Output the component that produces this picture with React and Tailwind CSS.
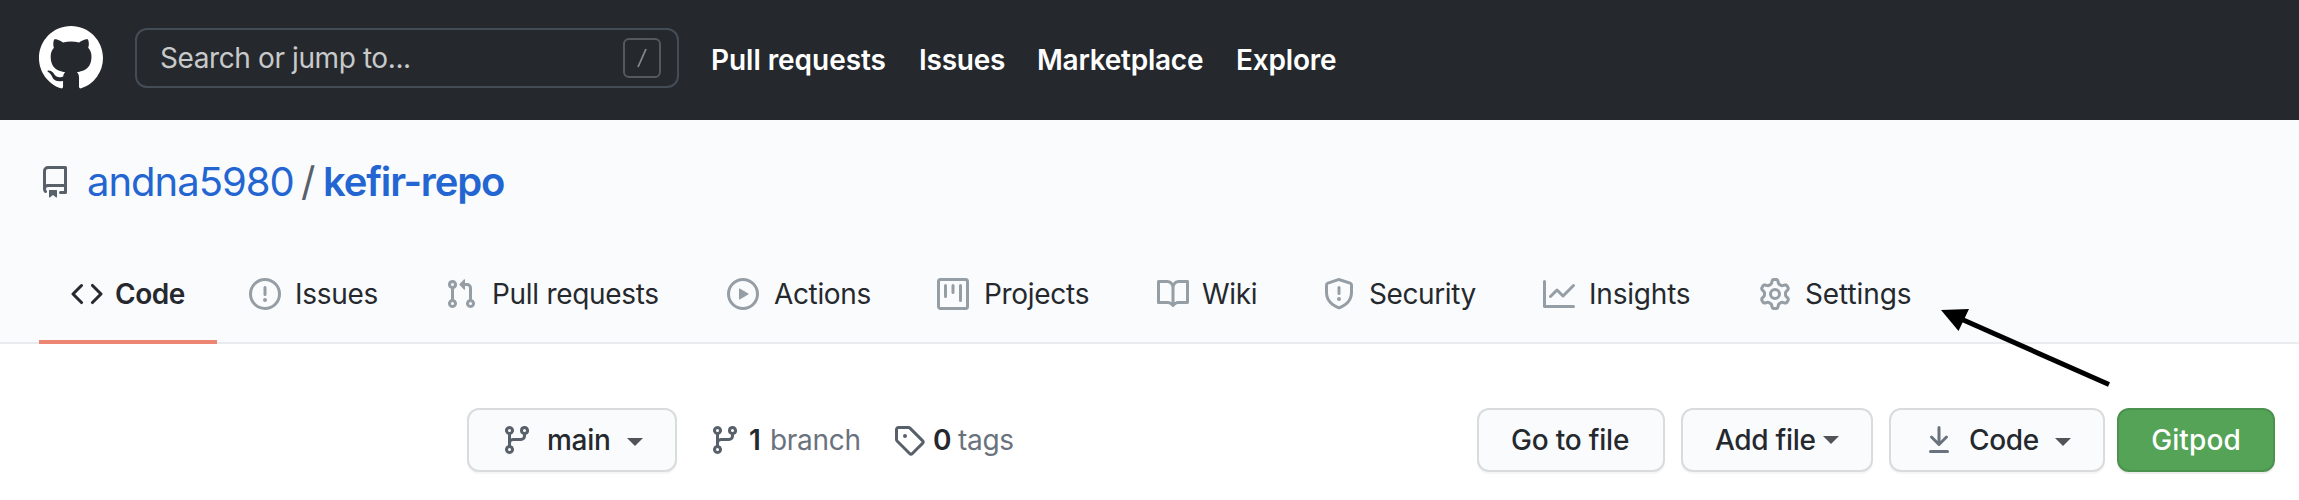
import React from "react";

const paths = {
  github:
    "M8 0C3.58 0 0 3.58 0 8c0 3.54 2.29 6.53 5.47 7.59.4.07.55-.17.55-.38 0-.19-.01-.82-.01-1.49-2.01.37-2.53-.49-2.69-.94-.09-.23-.48-.94-.82-1.13-.28-.15-.68-.52-.01-.53.63-.01 1.08.58 1.23.82.72 1.21 1.87.87 2.33.66.07-.52.28-.87.51-1.07-1.78-.2-3.64-.89-3.64-3.95 0-.87.31-1.59.82-2.15-.08-.2-.36-1.02.08-2.12 0 0 .67-.21 2.2.82.64-.18 1.32-.27 2-.27.68 0 1.36.09 2 .27 1.53-1.04 2.2-.82 2.2-.82.44 1.1.16 1.92.08 2.12.51.56.82 1.27.82 2.15 0 3.07-1.87 3.75-3.65 3.95.29.25.54.73.54 1.48 0 1.07-.01 1.93-.01 2.2 0 .21.15.46.55.38A8.013 8.013 0 0016 8c0-4.42-3.58-8-8-8z",
  repo: "M2 2.5A2.5 2.5 0 014.5 0h8.75a.75.75 0 01.75.75v12.5a.75.75 0 01-.75.75h-2.5a.75.75 0 110-1.5h1.75v-2h-8a1 1 0 00-.714 1.7.75.75 0 01-1.072 1.05A2.495 2.495 0 012 11.5v-9zm10.5-1V9h-8c-.356 0-.694.074-1 .208V2.5a1 1 0 011-1h8zM5 12.25v3.25a.25.25 0 00.4.2l1.45-1.087a.25.25 0 01.3 0L8.6 15.7a.25.25 0 00.4-.2v-3.25a.25.25 0 00-.25-.25h-3.5a.25.25 0 00-.25.25z",
  code: "M4.72 3.22a.75.75 0 011.06 1.06L2.06 8l3.72 3.72a.75.75 0 11-1.06 1.06L.47 8.53a.75.75 0 010-1.06l4.25-4.25zm6.56 0a.75.75 0 10-1.06 1.06L13.94 8l-3.72 3.72a.75.75 0 101.06 1.06l4.25-4.25a.75.75 0 000-1.06l-4.25-4.25z",
  issue:
    "M8 1.5a6.5 6.5 0 100 13 6.5 6.5 0 000-13zM0 8a8 8 0 1116 0A8 8 0 010 8zm9 3a1 1 0 11-2 0 1 1 0 012 0zm-.25-6.25a.75.75 0 00-1.5 0v3.5a.75.75 0 001.5 0v-3.5z",
  pull: "M7.177 3.073L9.573.677A.25.25 0 0110 .854v4.792a.25.25 0 01-.427.177L7.177 3.427a.25.25 0 010-.354zM3.75 2.5a.75.75 0 100 1.5.75.75 0 000-1.5zm-2.25.75a2.25 2.25 0 113 2.122v5.256a2.251 2.251 0 11-1.5 0V5.372A2.25 2.25 0 011.5 3.25zM11 2.5h-1V4h1a1 1 0 011 1v5.628a2.251 2.251 0 101.5 0V5A2.5 2.5 0 0011 2.5zm1 10.25a.75.75 0 111.5 0 .75.75 0 01-1.5 0zM3.75 12a.75.75 0 100 1.5.75.75 0 000-1.5z",
  play: "M1.5 8a6.5 6.5 0 1113 0 6.5 6.5 0 01-13 0zM8 0a8 8 0 100 16A8 8 0 008 0zM6.379 5.227A.25.25 0 006 5.442v5.117a.25.25 0 00.379.214l4.264-2.559a.25.25 0 000-.428L6.379 5.227z",
  project:
    "M1.75 0A1.75 1.75 0 000 1.75v12.5C0 15.216.784 16 1.75 16h12.5A1.75 1.75 0 0016 14.25V1.75A1.75 1.75 0 0014.25 0H1.75zM1.5 1.75a.25.25 0 01.25-.25h12.5a.25.25 0 01.25.25v12.5a.25.25 0 01-.25.25H1.75a.25.25 0 01-.25-.25V1.75zM11.75 3a.75.75 0 00-.75.75v7.5a.75.75 0 001.5 0v-7.5a.75.75 0 00-.75-.75zm-8.25.75a.75.75 0 011.5 0v5.5a.75.75 0 01-1.5 0v-5.5zM8 3a.75.75 0 00-.75.75v3.5a.75.75 0 001.5 0v-3.5A.75.75 0 008 3z",
  book: "M0 1.75A.75.75 0 01.75 1h4.253c1.227 0 2.317.59 3 1.501A3.744 3.744 0 0111.006 1h4.245a.75.75 0 01.75.75v10.5a.75.75 0 01-.75.75h-4.507a2.25 2.25 0 00-1.591.659l-.622.621a.75.75 0 01-1.06 0l-.622-.621A2.25 2.25 0 005.258 13H.75a.75.75 0 01-.75-.75V1.75zm8.755 3a2.25 2.25 0 012.25-2.25H14.5v9h-3.757c-.71 0-1.4.201-1.992.572l.004-7.322zm-1.504 7.324l.004-5.073-.002-2.253A2.25 2.25 0 005.003 2.5H1.5v9h3.757a3.75 3.75 0 011.994.574z",
  shield:
    "M7.467.133a1.75 1.75 0 011.066 0l5.25 1.68A1.75 1.75 0 0115 3.48V7c0 1.566-.32 3.182-1.303 4.682-.983 1.498-2.585 2.813-5.032 3.855a1.7 1.7 0 01-1.33 0c-2.447-1.042-4.049-2.357-5.032-3.855C1.32 10.182 1 8.566 1 7V3.48a1.75 1.75 0 011.217-1.667l5.25-1.68zm.61 1.429a.25.25 0 00-.153 0l-5.25 1.68a.25.25 0 00-.174.238V7c0 1.358.275 2.666 1.057 3.86.784 1.194 2.121 2.34 4.366 3.297a.2.2 0 00.154 0c2.245-.956 3.582-2.104 4.366-3.298C13.225 9.666 13.5 8.36 13.5 7V3.48a.25.25 0 00-.174-.237l-5.25-1.68zM9 10.5a1 1 0 11-2 0 1 1 0 012 0zm-.25-5.75a.75.75 0 10-1.5 0v3a.75.75 0 001.5 0v-3z",
  graph:
    "M1.5 1.75a.75.75 0 00-1.5 0v12.5c0 .414.336.75.75.75h14.5a.75.75 0 000-1.5H1.5V1.75zm14.28 2.53a.75.75 0 00-1.06-1.06L10 7.94 7.53 5.47a.75.75 0 00-1.06 0L3.22 8.72a.75.75 0 001.06 1.06L7 7.06l2.47 2.47a.75.75 0 001.06 0l5.25-5.25z",
  gear: "M7.429 1.525a6.593 6.593 0 011.142 0c.036.003.108.036.137.146l.289 1.105c.147.56.55.967.997 1.189.174.086.341.183.501.29.417.278.97.423 1.53.27l1.102-.303c.11-.03.175.016.195.046.219.31.41.641.573.989.014.031.022.11-.059.19l-.815.806c-.411.406-.562.957-.53 1.456a4.588 4.588 0 010 .582c-.032.499.119 1.05.53 1.456l.815.806c.08.08.073.159.059.19a6.494 6.494 0 01-.573.99c-.02.029-.086.074-.195.045l-1.103-.303c-.559-.153-1.112-.008-1.529.27-.16.107-.327.204-.5.29-.449.222-.851.628-.998 1.189l-.289 1.105c-.029.11-.101.143-.137.146a6.613 6.613 0 01-1.142 0c-.036-.003-.108-.037-.137-.146l-.289-1.105c-.147-.56-.55-.967-.997-1.189a4.502 4.502 0 01-.501-.29c-.417-.278-.97-.423-1.53-.27l-1.102.303c-.11.03-.175-.016-.195-.046a6.492 6.492 0 01-.573-.989c-.014-.031-.022-.11.059-.19l.815-.806c.411-.406.562-.957.53-1.456a4.587 4.587 0 010-.582c.032-.499-.119-1.05-.53-1.456l-.815-.806c-.08-.08-.073-.159-.059-.19a6.44 6.44 0 01.573-.99c.02-.029.086-.075.195-.045l1.103.303c.559.153 1.112.008 1.529-.27.16-.107.327-.204.5-.29.449-.222.851-.628.998-1.189l.289-1.105c.029-.11.101-.143.137-.146zM8 0c-.236 0-.47.01-.701.03-.743.065-1.29.615-1.458 1.261l-.29 1.106c-.017.066-.078.158-.211.224a5.994 5.994 0 00-.668.386c-.123.082-.233.09-.3.071L3.27 2.776c-.644-.177-1.392.02-1.82.63a7.977 7.977 0 00-.704 1.217c-.315.675-.111 1.422.363 1.891l.815.806c.05.048.098.147.088.294a6.084 6.084 0 000 .772c.01.147-.038.246-.088.294l-.815.806c-.474.469-.678 1.216-.363 1.891.2.428.436.835.704 1.218.428.609 1.176.806 1.82.63l1.103-.303c.066-.019.176-.011.299.071.213.143.436.272.668.386.133.066.194.158.212.224l.289 1.106c.169.646.715 1.196 1.458 1.26a8.094 8.094 0 001.402 0c.743-.064 1.29-.614 1.458-1.26l.29-1.106c.017-.066.078-.158.211-.224a5.98 5.98 0 00.668-.386c.123-.082.233-.09.3-.071l1.102.302c.644.177 1.392-.02 1.82-.63.268-.382.505-.789.704-1.217.315-.675.111-1.422-.364-1.891l-.814-.806c-.05-.048-.098-.147-.088-.294a6.1 6.1 0 000-.772c-.01-.147.039-.246.088-.294l.814-.806c.475-.469.679-1.216.364-1.891a7.992 7.992 0 00-.704-1.218c-.428-.609-1.176-.806-1.82-.63l-1.103.303c-.066.019-.176.011-.299-.071a5.991 5.991 0 00-.668-.386c-.133-.066-.194-.158-.212-.224L10.16 1.29C9.99.645 9.444.095 8.701.031A8.094 8.094 0 008 0zm1.5 8a1.5 1.5 0 11-3 0 1.5 1.5 0 013 0zM11 8a3 3 0 11-6 0 3 3 0 016 0z",
  branch:
    "M11.75 2.5a.75.75 0 100 1.5.75.75 0 000-1.5zm-2.25.75a2.25 2.25 0 113 2.122V6A2.5 2.5 0 0110 8.5H6a1 1 0 00-1 1v1.128a2.251 2.251 0 11-1.5 0V5.372a2.25 2.25 0 111.5 0v1.836A2.492 2.492 0 016 7h4a1 1 0 001-1v-.628A2.25 2.25 0 019.5 3.25zM4.25 12a.75.75 0 100 1.5.75.75 0 000-1.5zM3.5 3.25a.75.75 0 111.5 0 .75.75 0 01-1.5 0z",
  tag: "M2.5 7.775V2.75a.25.25 0 01.25-.25h5.025a.25.25 0 01.177.073l6.25 6.25a.25.25 0 010 .354l-5.025 5.025a.25.25 0 01-.354 0l-6.25-6.25a.25.25 0 01-.073-.177zm-1.5 0V2.75C1 1.784 1.784 1 2.75 1h5.025c.464 0 .91.184 1.238.513l6.25 6.25a1.75 1.75 0 010 2.474l-5.026 5.026a1.75 1.75 0 01-2.474 0l-6.25-6.25A1.75 1.75 0 011 7.775zM6 5a1 1 0 100 2 1 1 0 000-2z",
  download:
    "M7.47 10.78a.75.75 0 001.06 0l3.75-3.75a.75.75 0 00-1.06-1.06L8.75 8.44V1.75a.75.75 0 00-1.5 0v6.69L4.78 5.97a.75.75 0 00-1.06 1.06l3.75 3.75zM3.75 13a.75.75 0 000 1.5h8.5a.75.75 0 000-1.5h-8.5z",
};

function Icon({ name, className = "" }) {
  return (
    <svg viewBox="0 0 16 16" fill="currentColor" fillRule="evenodd" className={"size-8 shrink-0 " + className}>
      <path d={paths[name]} />
    </svg>
  );
}

function Caret({ className = "" }) {
  return (
    <svg viewBox="0 0 16 8" className={"h-2 w-4 shrink-0 fill-[#505357] " + className}>
      <path d="M0 0h16L8 8z" />
    </svg>
  );
}

const tabs = [
  { icon: "issue", label: "Issues", cls: "w-[196px]", text: "ml-3.5 tracking-[-0.3px]" },
  { icon: "pull", label: "Pull requests", cls: "w-[282px]", text: "ml-[15px] tracking-[-0.3px]" },
  { icon: "play", label: "Actions", cls: "w-[210px]", text: "ml-[15px] tracking-[-0.35px]" },
  { icon: "project", label: "Projects", cls: "w-[220px]", text: "ml-[15px] tracking-[-0.3px]" },
  { icon: "book", label: "Wiki", cls: "w-[166px]", text: "ml-[13px] tracking-[-0.3px]" },
  { icon: "shield", label: "Security", cls: "w-[220px]", text: "ml-3.5 tracking-[-0.4px]" },
  { icon: "graph", label: "Insights", cls: "w-[216px]", text: "ml-3.5 tracking-[-0.2px]" },
  { icon: "gear", label: "Settings", cls: "w-[170px]", text: "ml-3.5 tracking-[-0.1px]" },
];

const button =
  "flex h-16 shrink-0 items-center rounded-xl border-2 border-[#d9dbdc] bg-[#fafbfd] text-left font-medium shadow-[0_2px_0_rgba(27,31,35,0.04)]";

export default function App() {
  return (
    <div className="relative h-[500px] w-[2299px] overflow-hidden whitespace-nowrap bg-white font-['Inter','Liberation_Sans',sans-serif] text-[28px] leading-[42px] text-[#25292e]">
      <header className="flex h-[120px] items-start bg-[#25292e] pl-[39px] text-white">
        <Icon name="github" className="mt-[26px] size-16!" />
        <div className="ml-8 mt-7 flex h-[60px] w-[544px] items-center justify-between rounded-xl border-2 border-[#444d56] pl-[23px] pr-4">
          <span className="tracking-[-0.4px] text-[#c8c9cb]">Search or jump to...</span>
          <span className="flex h-10 w-[38px] items-center justify-center rounded-md border-2 border-[#55595d]">
            <svg viewBox="0 0 10 20" className="h-5 w-2.5 stroke-[#85888b]" fill="none" strokeWidth="1.8">
              <path d="M1 19L9 1" />
            </svg>
          </span>
        </div>
        <nav className="ml-8 mt-[39px] flex font-semibold">
          <a className="w-52 tracking-[-0.05px]">Pull requests</a>
          <a className="w-[118px] tracking-[-0.25px]">Issues</a>
          <a className="w-[199px] tracking-[-0.25px]">Marketplace</a>
          <a className="tracking-[-0.2px]">Explore</a>
        </nav>
      </header>

      <section className="flex h-[224px] flex-col justify-between border-b-2 border-[#eaecef] bg-[#fafbfd]">
        <h1 className="flex items-center pl-[39px] pt-8 text-[40px] leading-[60px]">
          <Icon name="repo" className="text-[#586069]" />
          <a className="ml-4 w-[214px] tracking-[-1px] text-[#2366d1]">andna5980</a>
          <span className="w-[22px] text-[#586069]">/</span>
          <a className="font-semibold tracking-[-1.15px] text-[#2366d1]">kefir-repo</a>
        </h1>
        <nav className="-mb-0.5 flex pl-[39px]">
          <a className="mr-8 flex h-24 w-[178px] items-center border-b-4 border-[#ec8572] pl-8 font-semibold">
            <Icon name="code" />
            <span className="ml-3 tracking-[-0.5px]">Code</span>
          </a>
          {tabs.map((t) => (
            <a key={t.label} className={"flex h-[92px] items-center " + t.cls}>
              <Icon name={t.icon} className="text-[#959da5]" />
              <span className={t.text}>{t.label}</span>
            </a>
          ))}
        </nav>
      </section>

      <main className="flex pl-[467px] pt-16">
        <button className={button + " w-[210px] pl-8"}>
          <Icon name="branch" className="text-[#586069]" />
          <span className="ml-3.5 w-20 tracking-[-0.3px]">main</span>
          <Caret className="mt-1" />
        </button>
        <a className="ml-8 flex h-16 w-[184px] items-center">
          <Icon name="branch" className="text-[#586069]" />
          <b className="ml-2 w-[21px] font-semibold">1</b>
          <span className="tracking-[-0.3px] text-[#6a737d]">branch</span>
        </a>
        <a className="flex h-16 w-[585px] items-center">
          <Icon name="tag" className="text-[#586069]" />
          <b className="ml-2 w-[25px] font-semibold">0</b>
          <span className="tracking-[-0.3px] text-[#6a737d]">tags</span>
        </a>
        <button className={button + " w-[188px] -ml-px pl-8"}>
          <span className="tracking-[-0.2px]">Go to file</span>
        </button>
        <button className={button + " ml-4 w-[192px] pl-8"}>
          <span className="w-[108px] tracking-[-0.3px]">Add file</span>
          <Caret />
        </button>
        <button className={button + " ml-4 w-[216px] pl-8"}>
          <Icon name="download" className="text-[#6a737d]" />
          <span className="ml-3.5 w-[86px] tracking-[-0.3px]">Code</span>
          <Caret className="mt-1" />
        </button>
        <button className="ml-3 flex h-16 w-[158px] shrink-0 items-center justify-center rounded-xl border-2 border-[#4c924f] bg-[#54a357] font-medium text-white shadow-[0_2px_0_rgba(27,31,35,0.08)]">
          <span className="tracking-[0.1px]">Gitpod</span>
        </button>
      </main>

      <svg className="pointer-events-none absolute left-[1930px] top-[300px] h-24 w-[190px]" viewBox="1930 300 190 96">
        <path d="M1960 318.5L2109 384.500" stroke="#000" strokeWidth="5" />
        <path d="M1941 310L1969 309L1958.500 331z" />
      </svg>
    </div>
  );
}
